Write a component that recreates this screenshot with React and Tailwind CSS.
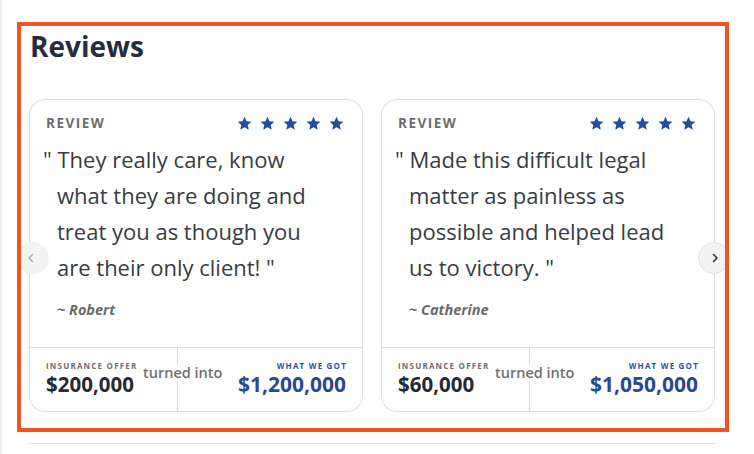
const reviews = [
    {
        lines: ["They really care, know", "what they are doing and", "treat you as though you", "are their only client! \""],
        author: "Robert",
        offer: "$200,000",
        got: "$1,200,000",
    },
    {
        lines: ["Made this difficult legal", "matter as painless as", "possible and helped lead", "us to victory. \""],
        author: "Catherine",
        offer: "$60,000",
        got: "$1,050,000",
    },
];

const Star = () => (
    <svg viewBox="0 0 24 24" className="w-[15px] h-[15px]" fill="#1f4f9d">
        <path d="M12 1l3.2 7.2 7.8.8-5.9 5.2 1.8 7.8L12 18l-6.9 4 1.8-7.8L1 9l7.8-.8z" />
    </svg>
);

const ReviewCard = ({ review }) => {
    return (
        <div className="w-[334px] h-[313px] border border-[#dcdcdc] rounded-[16px] flex flex-col bg-white">
            <div className="flex-1 pl-[16px] pr-[18px]">
                <div className="pt-[15px] flex items-center justify-between">
                    <span className="text-[13.5px] leading-[16px] font-bold tracking-[1.5px] text-[#6e6e6e]">REVIEW</span>
                    <div className="flex gap-[8px]">
                        <Star /><Star /><Star /><Star /><Star />
                    </div>
                </div>
                <p className="mt-[10px] pl-[11px] indent-[-14px] text-[22px] leading-[36px] text-[#383c42] whitespace-nowrap">
                    {"\" "}{review.lines[0]}<br />
                    {review.lines[1]}<br />
                    {review.lines[2]}<br />
                    {review.lines[3]}
                </p>
                <p className="mt-[15px] pl-[11px] text-[14.5px] leading-[20px] font-bold italic text-[#6a6a6a]">~ {review.author}</p>
            </div>
            <div className="relative h-[64px] border-t border-[#dcdcdc] grid grid-cols-[148px_1fr]">
                <div className="border-r border-[#dcdcdc] pl-[16px] pt-[13px]">
                    <div className="text-[8px] leading-[10px] font-bold tracking-[1.2px] text-[#6e6e6e] whitespace-nowrap">INSURANCE OFFER</div>
                    <div className="mt-[1px] text-[20.5px] leading-[24px] font-bold text-[#262a33]">{review.offer}</div>
                </div>
                <div className="pr-[16px] pt-[13px] text-right">
                    <div className="mr-[-1px] text-[8px] leading-[10px] font-bold tracking-[1.2px] text-[#34509a] whitespace-nowrap">WHAT WE GOT</div>
                    <div className="mt-[1px] text-[21px] leading-[24px] font-bold text-[#2a4994]">{review.got}</div>
                </div>
                <span className="absolute left-[112px] top-[17px] bg-white px-[1px] text-[14.5px] leading-[16px] font-semibold text-[#707070]">turned into</span>
            </div>
        </div>
    );
};

export default function App() {
    return (
        <div className="relative w-[754px] h-[454px] bg-white overflow-hidden border-l-2 border-[#efefef] font-['Open_Sans',sans-serif]">
            <div className="pl-[27px] pt-[28px]">
                <h2 className="ml-[1px] text-[28px] leading-[36px] font-bold text-[#252d3b]">Reviews</h2>
                <div className="mt-[35px] flex gap-[18px]">
                    {reviews.map((r) => (
                        <ReviewCard key={r.author} review={r} />
                    ))}
                </div>
                <div className="mt-[31px] ml-[-2px] w-[688px] h-[1px] bg-[#e4e4e4]" />
            </div>

            {/* carousel arrows */}
            <button className="absolute left-[15px] top-[242px] w-[32px] h-[32px] rounded-full bg-[#f3f3f3] flex items-center justify-center pr-[4px]">
                <svg viewBox="0 0 24 24" className="w-[12px] h-[12px]" fill="none" stroke="#a9a9a9" strokeWidth="2.5" strokeLinecap="round" strokeLinejoin="round">
                    <path d="M15 5l-7 7 7 7" />
                </svg>
            </button>
            <button className="absolute left-[696px] top-[242px] w-[32px] h-[32px] rounded-full bg-[#f3f3f3] border border-[#e2e2e2] flex items-center justify-center pl-[2px]">
                <svg viewBox="0 0 24 24" className="w-[12px] h-[12px]" fill="none" stroke="#2f2f2f" strokeWidth="3" strokeLinecap="round" strokeLinejoin="round">
                    <path d="M9 5l7 7-7 7" />
                </svg>
            </button>

            {/* highlight frame */}
            <div className="absolute left-[15px] top-[22px] w-[712px] h-[410px] border-[4px] border-[#f2541f] pointer-events-none" />
        </div>
    );
}
